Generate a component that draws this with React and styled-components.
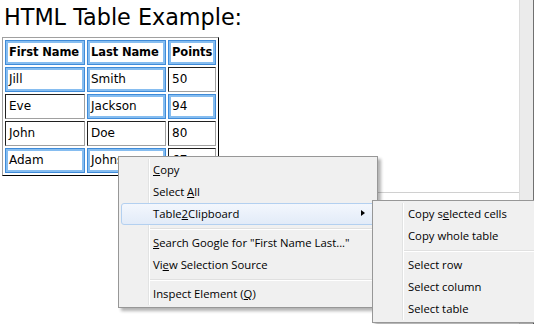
import React from 'react';
import styled, { createGlobalStyle, css } from 'styled-components';

const GlobalStyle = createGlobalStyle`
  html, body {
    margin: 0;
    padding: 0;
    background: #fff;
  }
  body {
    font-family: "DejaVu Sans", Verdana, sans-serif;
  }
`;

const Page = styled.div`
  position: relative;
  display: flex;
  width: 534px;
  height: 324px;
  overflow: hidden;
  background: #fff;
`;

const Content = styled.div`
  flex: 1;
  padding-left: 2px;
`;

const Title = styled.h1`
  margin: 5px 0 7px 2px;
  font-family: "DejaVu Sans", Verdana, sans-serif;
  font-size: 22.3px;
  font-weight: normal;
  line-height: 25px;
  color: #000;
`;

const Table = styled.table`
  border-collapse: separate;
  border-spacing: 2px;
  border: 1px solid;
  border-color: #a0a0a0 #000 #000 #a0a0a0;
  font-size: 12px;
`;

const Cell = styled.td`
  box-sizing: border-box;
  height: 25px;
  padding: 4px 3px;
  line-height: 15px;
  text-align: left;
  white-space: nowrap;
  color: #000;
  border: 1px solid;
  border-color: #202020 #a0a0a0 #a0a0a0 #202020;
  font-weight: ${(p) => (p.$head ? 'bold' : 'normal')};
  font-size: ${(p) => (p.$head ? '11.5px' : '12px')};
  letter-spacing: ${(p) => (p.$head ? '-0.1px' : '0')};
  ${(p) =>
    p.$sel &&
    css`
      border-color: #3f8bd8;
      box-shadow: inset 0 0 0 2px #86bdf0;
    `}
`;

const Divider = styled.div`
  margin: 16px 0 0 300px;
  border-top: 1px solid #d0d0d0;
`;

const Strip = styled.div`
  width: 13px;
  background: #ebebeb;
  border-left: 1px solid #dcdcdc;
  border-right: 1px solid #707070;
`;

const Menu = styled.div`
  position: absolute;
  left: ${(p) => p.$x}px;
  top: ${(p) => p.$y}px;
  width: ${(p) => p.$w}px;
  box-sizing: border-box;
  padding: 2px;
  background: #f0f0f0;
  border: 1px solid #979797;
  box-shadow: 3px 3px 3px rgba(0, 0, 0, 0.3);
  font-family: "Open Sans", "Noto Sans", sans-serif;
  font-size: 11.3px;
  color: #000;

  &::before {
    content: '';
    position: absolute;
    top: 2px;
    bottom: 2px;
    left: 29px;
    width: 1px;
    background: #e2e3e3;
    box-shadow: 1px 0 0 #fff;
  }
`;

const Item = styled.div`
  position: relative;
  height: 22px;
  box-sizing: border-box;
  padding-left: ${(p) => (p.$sub ? 32 : 31)}px;
  line-height: 20px;
  border: 1px solid transparent;
  border-radius: 3px;
  white-space: nowrap;
  ${(p) =>
    p.$active &&
    css`
      background: linear-gradient(#f3f7fd, #e2ebf8);
      border-color: #b3d0f0;
    `}
`;

const Sep = styled.div`
  height: 7px;
  box-sizing: border-box;
  padding-top: 3px;
  margin-left: 28px;
  &::after {
    content: '';
    display: block;
    height: 1px;
    background: #e0e0e0;
    box-shadow: 0 1px 0 #fff;
  }
`;

const Arrow = styled.span`
  position: absolute;
  right: 9px;
  top: 6px;
  width: 0;
  height: 0;
  border-top: 3.5px solid transparent;
  border-bottom: 3.5px solid transparent;
  border-left: 4px solid #000;
`;

const rows = [
  { cells: ['First Name', 'Last Name', 'Points'], sel: [1, 1, 1], head: true },
  { cells: ['Jill', 'Smith', '50'], sel: [1, 1, 0] },
  { cells: ['Eve', 'Jackson', '94'], sel: [0, 1, 1] },
  { cells: ['John', 'Doe', '80'], sel: [0, 0, 0] },
  { cells: ['Adam', 'Johnson', '67'], sel: [1, 1, 0] },
];

const widths = [80, 79, 48];

const App = () => {
  return (
    <>
      <GlobalStyle />
      <Page>
        <Content>
          <Title>HTML Table Example:</Title>
          <Table>
            <tbody>
              {rows.map((r, i) => (
                <tr key={i}>
                  {r.cells.map((c, j) => (
                    <Cell
                      key={j}
                      as={r.head ? 'th' : 'td'}
                      $head={r.head}
                      $sel={r.sel[j]}
                      style={i === 0 ? { width: widths[j] } : undefined}
                    >
                      {c}
                    </Cell>
                  ))}
                </tr>
              ))}
            </tbody>
          </Table>
          <Divider />
        </Content>
        <Strip />

        <Menu $x={118} $y={156} $w={260}>
          <Item><u>C</u>opy</Item>
          <Item>Select <u>A</u>ll</Item>
          <Item $active>
            Table<u>2</u>Clipboard
            <Arrow />
          </Item>
          <Sep />
          <Item><u>S</u>earch Google for "First Name Last..."</Item>
          <Item>Vi<u>e</u>w Selection Source</Item>
          <Sep />
          <Item>Inspect Element (<u>Q</u>)</Item>
        </Menu>

        <Menu $x={372} $y={200} $w={190}>
          <Item $sub>Copy s<u>e</u>lected cells</Item>
          <Item $sub>Copy whole table</Item>
          <Sep />
          <Item $sub>Select row</Item>
          <Item $sub>Select column</Item>
          <Item $sub>Select table</Item>
        </Menu>
      </Page>
    </>
  );
};

export default App;
